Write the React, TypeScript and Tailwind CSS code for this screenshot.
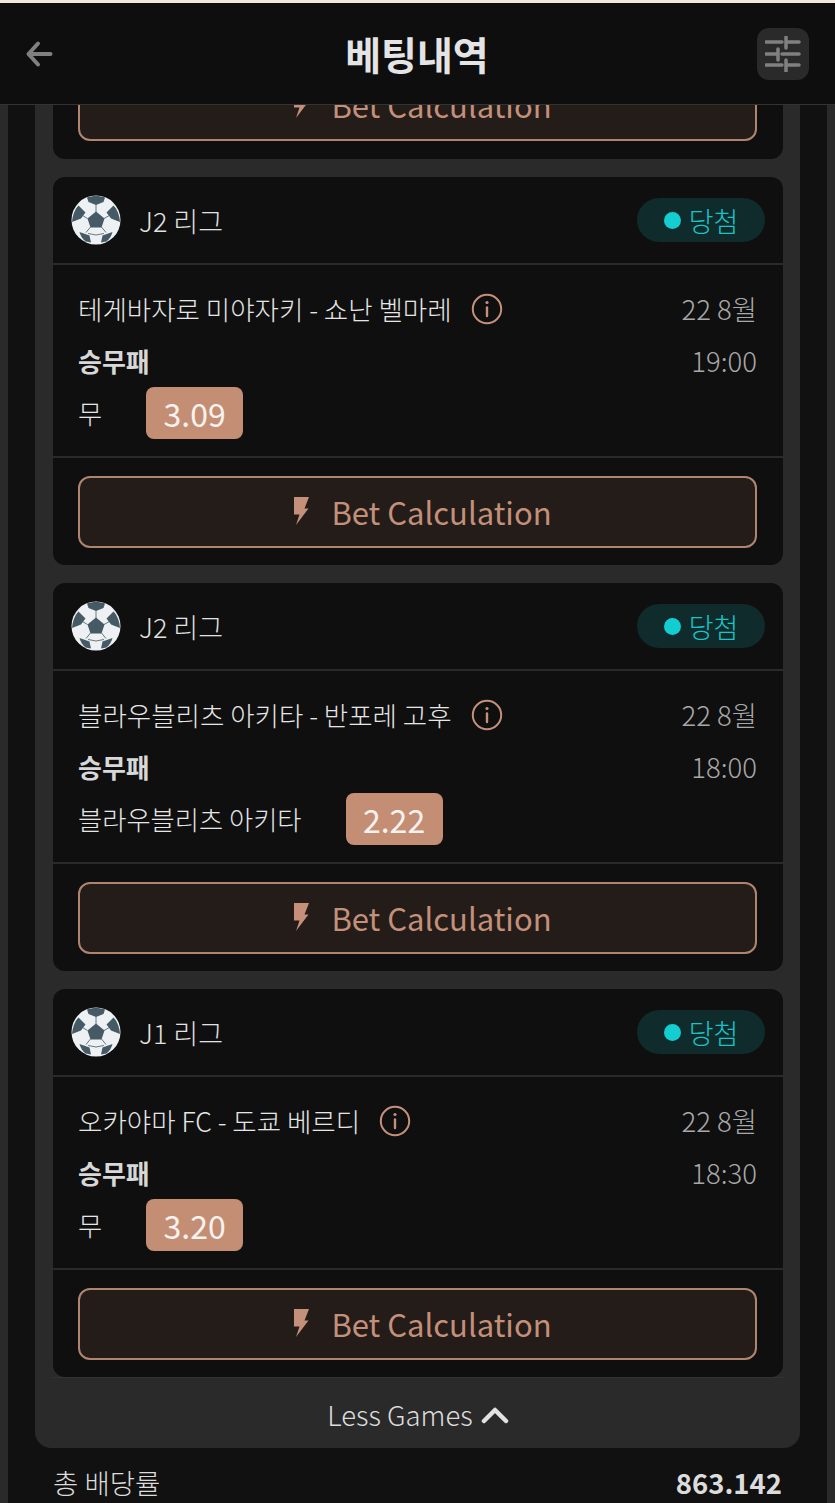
const BetButton = () => {
  return (
    <button className="flex h-[72px] w-full shrink-0 items-center justify-center rounded-xl border-2 border-[#b08570] bg-[#231c19] text-[#c4907a]">
      <svg width="16" height="28" viewBox="0 0 16 28" fill="currentColor" className="ml-[10px] mr-[22px] -mt-[2px]">
        <path d="M1 0H16L11.5 11.5H15.5L3 28L6.5 17.5H1Z" />
      </svg>
      <span className="-mt-[2px] text-[31px] leading-none">Bet Calculation</span>
    </button>
  );
};

const Ball = () => {
  return (
    <svg width="50" height="50" viewBox="0 0 50 50" className="shrink-0">
      <circle cx="25" cy="25" r="24.5" fill="#eef1f3" />
      <path d="M25 9.5V17M33 23.5L41 19M30.5 32L35 37.5M19.5 32L15 37.5M16.5 23.5L9 19M17 38.5L25 40L33 38.5" stroke="#455a64" strokeWidth="0.8" fill="none" />
      <path d="M25 16.5L33.5 23.5L30.5 32.5H19.5L16.5 23.5Z" fill="#455a64" />
      <path d="M16 2.5C21.5 0.5 28.5 0.5 34 2.5L32.5 7L25 10L17.5 7Z" fill="#455a64" />
      <path d="M7.5 10.5C4 14 1.5 20 1 27L10 23.5L14.5 17.5Z" fill="#455a64" />
      <path d="M42.5 10.5C46 14 48.5 20 49 27L40 23.5L35.5 17.5Z" fill="#455a64" />
      <path d="M8.5 37L18.5 40.5L20 47.5L14.5 46.5C11.5 44 9.5 41 8.5 37Z" fill="#455a64" />
      <path d="M41.5 37L31.5 40.5L30 47.5L35.5 46.5C38.5 44 40.5 41 41.5 37Z" fill="#455a64" />
    </svg>
  );
};

const InfoIcon = () => {
  return (
    <svg width="32" height="32" viewBox="0 0 32 32" fill="none" stroke="#c4907a" className="shrink-0">
      <circle cx="16" cy="16" r="14.2" strokeWidth="2" />
      <path d="M16 14.5V23" strokeWidth="2.4" strokeLinecap="round" />
      <circle cx="16" cy="9.5" r="1.6" fill="#c4907a" stroke="none" />
    </svg>
  );
};

type Game = {
  league: string;
  match: string;
  date: string;
  time: string;
  pick: string;
  odds: string;
};

const games: Game[] = [
  { league: "J2 리그", match: "테게바자로 미야자키 - 쇼난 벨마레", date: "22 8월", time: "19:00", pick: "무", odds: "3.09" },
  { league: "J2 리그", match: "블라우블리츠 아키타 - 반포레 고후", date: "22 8월", time: "18:00", pick: "블라우블리츠 아키타", odds: "2.22" },
  { league: "J1 리그", match: "오카야마 FC - 도쿄 베르디", date: "22 8월", time: "18:30", pick: "무", odds: "3.20" },
];

const GameCard = ({ game }: { game: Game }) => {
  return (
    <div className="rounded-xl bg-[#0f0f0f]">
      <div className="flex h-[88px] items-center justify-between border-b-2 border-[#2a2a2a] px-[18px]">
        <div className="flex items-center gap-[18px]">
          <Ball />
          <span className="text-[27px] font-light leading-none text-[#e2e2e2]">{game.league}</span>
        </div>
        <div className="flex h-[44px] w-[128px] items-center justify-center gap-[8px] rounded-full bg-[#0f2b2c]">
          <span className="h-[17px] w-[17px] rounded-full bg-[#14cdd0]" />
          <span className="text-[27px] font-light leading-none text-[#18c4c6]">당첨</span>
        </div>
      </div>
      <div className="h-[193px] border-b-2 border-[#2a2a2a] pl-[25px] pr-[26px] pt-[26px]">
        <div className="flex h-[36px] items-center justify-between">
          <div className="flex items-center gap-[19px]">
            <span className="text-[26.5px] font-light leading-none text-[#e6e6e6]">{game.match}</span>
            <InfoIcon />
          </div>
          <span className="text-[27.5px] font-light leading-none text-[#a8a8a8]">{game.date}</span>
        </div>
        <div className="mt-[16px] flex h-[36px] items-center justify-between">
          <span className="text-[26px] font-bold leading-none text-[#d8d8d8]">승무패</span>
          <span className="text-[27.5px] font-light leading-none text-[#a8a8a8]">{game.time}</span>
        </div>
        <div className="mt-[8px] flex items-center gap-[44px]">
          <span className="text-[26.3px] font-light leading-none text-[#e6e6e6]">{game.pick}</span>
          <span className="flex h-[52px] w-[97px] items-center justify-center rounded-lg bg-[#c48e74] text-[32px] leading-none text-[#f7f2ef]">
            {game.odds}
          </span>
        </div>
      </div>
      <div className="pb-[17px] pl-[25px] pr-[26px] pt-[18px]">
        <BetButton />
      </div>
    </div>
  );
};

const App = () => {
  return (
    <div
      className="flex h-[1503px] w-[835px] flex-col overflow-hidden bg-[#2a2a2a]"
      style={{ fontFamily: '"Noto Sans CJK KR", "Noto Sans", sans-serif' }}
    >
      <div className="h-[3px] shrink-0 bg-[#f3e6da]" />
      <header className="flex h-[102px] shrink-0 items-center justify-between border-b border-[#333333] bg-[#0e0e0e] pl-[25px] pr-[26px]">
        <div className="w-[52px]">
          <svg width="30" height="28" viewBox="0 0 30 28" fill="none" stroke="#808080" strokeWidth="4" strokeLinecap="round" strokeLinejoin="round">
            <path d="M25.5 14H4M13 3.5L3.5 14L13 24.5" />
          </svg>
        </div>
        <h1 className="text-[39px] font-bold leading-none text-[#e4e4e4]">베팅내역</h1>
        <button className="flex h-[52px] w-[52px] items-center justify-center rounded-xl bg-[#2a2a2a]">
          <svg width="36" height="36" viewBox="0 0 36 36" fill="none" stroke="#808080" strokeWidth="3.5" strokeLinecap="round">
            <path d="M1 6H17M21 1V12M21 6H34M1 18H11M13 13V24M17 18H34M1 29H17M21 24V35M21 29H34" />
          </svg>
        </button>
      </header>
      <div className="mx-[8px] flex-1 bg-[#111111] px-[27px]">
        <div className="rounded-b-2xl bg-[#2a2a2a] pb-[70px] pl-[18px] pr-[17px]">
          <div className="flex h-[54px] flex-col justify-end overflow-hidden rounded-b-xl bg-[#0f0f0f] pb-[18px] pl-[25px] pr-[26px]">
            <BetButton />
          </div>
          <div className="mt-[18px] flex flex-col gap-[18px]">
            {games.map((game, i) => (
              <GameCard key={i} game={game} />
            ))}
          </div>
          <div className="relative h-px bg-[#333333]">
            <div className="absolute left-0 right-0 top-[24px] flex items-center justify-center gap-[8px] text-[27.5px] font-light leading-none text-[#dcdcdc]">
              <span>Less Games</span>
              <svg width="28" height="18" viewBox="0 0 28 18" fill="none" stroke="#e2e2e2" strokeWidth="4.5" strokeLinecap="round" strokeLinejoin="round">
                <path d="M3 15L14 4L25 15" />
              </svg>
            </div>
          </div>
        </div>
        <div className="mt-[21px] flex items-center justify-between px-[18px] text-[27.5px] leading-none">
          <span className="font-light text-[#dcdcdc]">총 배당률</span>
          <span className="font-bold text-[#dcdcdc]">863.142</span>
        </div>
      </div>
    </div>
  );
};

export default App;
